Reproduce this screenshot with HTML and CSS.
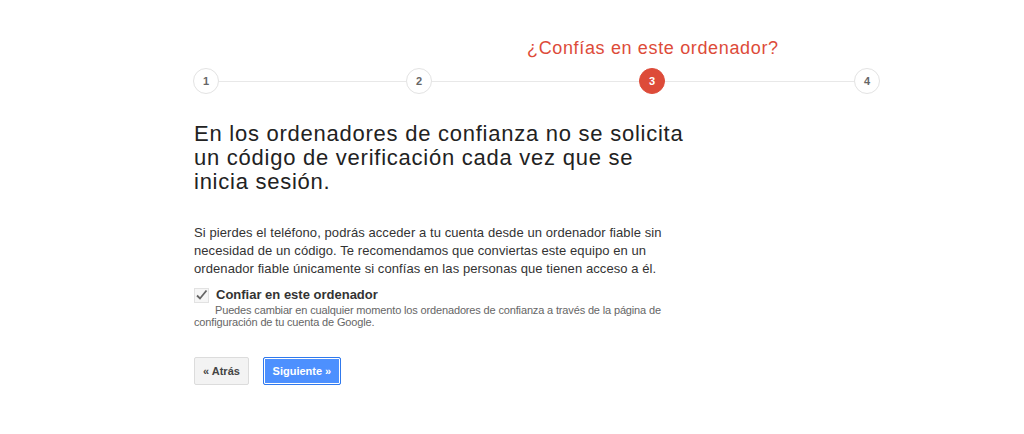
FILE: index.html
```html
<!DOCTYPE html>
<html lang="es">
<head>
  <meta charset="UTF-8" />
  <title>Verificación en dos pasos</title>
  <link rel="stylesheet" href="styles.css">
</head>
<body>
  <div class="page">
    <!-- Step header -->
    <div class="step-title">¿Confías en este ordenador?</div>
    <div class="steps">
      <span class="step">1</span>
      <span class="step-line line-a"></span>
      <span class="step">2</span>
      <span class="step-line line-b"></span>
      <span class="step current">3</span>
      <span class="step-line line-c"></span>
      <span class="step">4</span>
    </div>

    <h1>En los ordenadores de confianza no se solicita un código de verificación cada vez que se inicia sesión.</h1>

    <p class="intro">Si pierdes el teléfono, podrás acceder a tu cuenta desde un ordenador fiable sin necesidad de un código. Te recomendamos que conviertas este equipo en un ordenador fiable únicamente si confías en las personas que tienen acceso a él.</p>

    <div class="trust">
      <label class="trust-label">
        <span class="checkbox">
          <svg width="13" height="13" viewBox="0 0 13 13"><path d="M2 6.5 L5 9.5 L11.5 1.5" fill="none" stroke="#666" stroke-width="1.8"/></svg>
        </span>
        Confiar en este ordenador
      </label>
      <div class="trust-note">Puedes cambiar en cualquier momento los ordenadores de confianza a través de la página de configuración de tu cuenta de Google.</div>
    </div>

    <div class="actions">
      <button class="button">« Atrás</button>
      <button class="button primary">Siguiente »</button>
    </div>
  </div>
</body>
</html>
```

FILE: styles.css
```css
body {
  font-family: "Liberation Sans", Arial, sans-serif;
  background-color: #fff;
  color: #222;
  margin: 0;
}
.page {
  padding: 37px 0 0 193px;
}
.step-title {
  padding-left: 334px;
  font-size: 18px;
  line-height: 22px;
  letter-spacing: 0.65px;
  color: #dd4b39;
}
.steps {
  display: flex;
  align-items: center;
  margin-top: 9px;
}
.step {
  width: 24px;
  height: 24px;
  border: 1px solid #e3e3e3;
  border-radius: 50%;
  background: #fff;
  color: #666;
  font-size: 11px;
  font-weight: bold;
  line-height: 24px;
  text-align: center;
}
.step.current {
  background: #dd4b39;
  border-color: #dd4b39;
  color: #fff;
}
.step-line {
  height: 1px;
  background: #e8e8e8;
}
.line-a { width: 187px; }
.line-b { width: 207px; }
.line-c { width: 189px; }
h1 {
  width: 494px;
  margin: 28px 0 0 1px;
  font-size: 22px;
  font-weight: normal;
  line-height: 24px;
  letter-spacing: 0.75px;
  color: #222;
}
.intro {
  width: 485px;
  margin: 30px 0 0 1px;
  font-size: 13px;
  line-height: 18px;
  letter-spacing: 0.08px;
  color: #333;
}
.trust {
  width: 490px;
  margin: 8px 0 0 1px;
}
.trust-label {
  display: flex;
  align-items: center;
  gap: 7px;
  font-size: 13px;
  font-weight: bold;
  line-height: 18px;
  color: #333;
}
.checkbox {
  display: inline-flex;
  align-items: center;
  justify-content: center;
  width: 13px;
  height: 13px;
  border: 1px solid #e2e2e2;
  background: #f6f6f6;
}
.trust-note {
  text-indent: 21px;
  font-size: 11px;
  line-height: 12px;
  letter-spacing: -0.15px;
  color: #666;
}
.actions {
  display: flex;
  gap: 14px;
  margin: 29px 0 0 1px;
}
.button {
  height: 28px;
  padding: 0 8px;
  font-family: "Liberation Sans", Arial, sans-serif;
  font-size: 11px;
  font-weight: bold;
  color: #444;
  background: #f3f3f3;
  border: 1px solid #dcdcdc;
  border-radius: 2px;
}
.button.primary {
  width: 78px;
  color: #fff;
  background: #4d90fe;
  border-color: #3079ed;
  box-shadow: inset 0 0 0 1px #fff;
}
```
